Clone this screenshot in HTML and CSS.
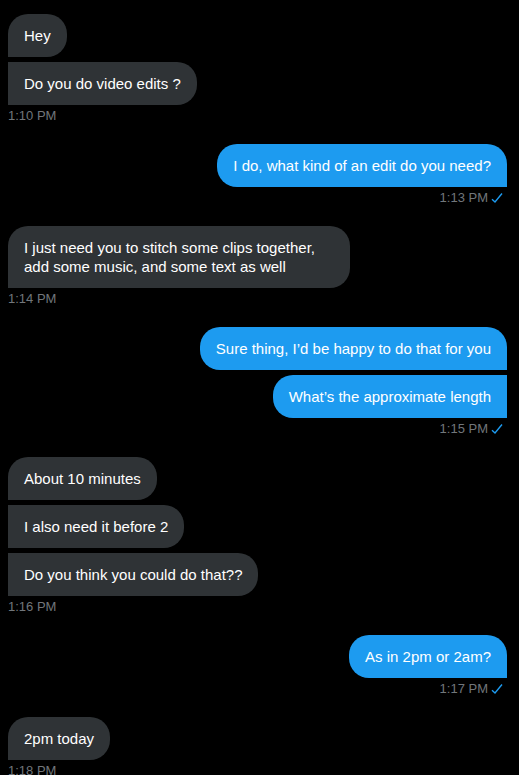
FILE: index.html
```html
<!DOCTYPE html>
<html lang="en">
<head>
    <meta charset="UTF-8">
    <meta name="viewport" content="width=device-width, initial-scale=1.0">
    <title>Messages</title>
    <link rel="stylesheet" href="styles.css">
</head>
<body>
<div class="chat">

  <div class="group in">
    <div class="bubble">Hey</div>
    <div class="bubble">Do you do video edits ?</div>
    <div class="time">1:10 PM</div>
  </div>

  <div class="group out">
    <div class="bubble">I do, what kind of an edit do you need?</div>
    <div class="time">1:13 PM <svg class="check" viewBox="0 0 12 12"><path d="M1 7.2 L4 10 L11 1.5" /></svg></div>
  </div>

  <div class="group in">
    <div class="bubble">I just need you to stitch some clips together, add some music, and some text as well</div>
    <div class="time">1:14 PM</div>
  </div>

  <div class="group out">
    <div class="bubble">Sure thing, I’d be happy to do that for you</div>
    <div class="bubble">What’s the approximate length</div>
    <div class="time">1:15 PM <svg class="check" viewBox="0 0 12 12"><path d="M1 7.2 L4 10 L11 1.5" /></svg></div>
  </div>

  <div class="group in">
    <div class="bubble">About 10 minutes</div>
    <div class="bubble">I also need it before 2</div>
    <div class="bubble">Do you think you could do that??</div>
    <div class="time">1:16 PM</div>
  </div>

  <div class="group out">
    <div class="bubble">As in 2pm or 2am?</div>
    <div class="time">1:17 PM <svg class="check" viewBox="0 0 12 12"><path d="M1 7.2 L4 10 L11 1.5" /></svg></div>
  </div>

  <div class="group in">
    <div class="bubble">2pm today</div>
    <div class="time">1:18 PM</div>
  </div>

</div>
</body>
</html>
```

FILE: styles.css
```css
body {
  margin: 0;
  background: #000;
  font-family: "Liberation Sans", Arial, sans-serif;
  color: #fff;
  overflow: hidden;
}

.chat {
  display: flex;
  flex-direction: column;
  gap: 20px;
  padding: 14px 12px 0 8px;
}

.group {
  display: flex;
  flex-direction: column;
  gap: 5px;
}

.group.in {
  align-items: flex-start;
}

.group.out {
  align-items: flex-end;
}

.bubble {
  font-size: 15px;
  line-height: 19px;
  padding: 12px 16px;
  max-width: 310px;
  border-radius: 20px;
}

.in .bubble {
  background: #2f3336;
  border-bottom-left-radius: 0;
}

.in .bubble + .bubble {
  border-top-left-radius: 0;
}

.out .bubble {
  background: #1d9bf0;
  border-bottom-right-radius: 0;
}

.out .bubble + .bubble {
  border-top-right-radius: 0;
}

.time {
  font-size: 13px;
  line-height: 16px;
  color: #71767b;
  margin-top: -2px;
  display: flex;
  align-items: center;
  gap: 3px;
}

.out .time {
  padding-right: 4px;
}

.check {
  width: 12px;
  height: 12px;
  fill: none;
  stroke: #1d9bf0;
  stroke-width: 1.4;
}
```
